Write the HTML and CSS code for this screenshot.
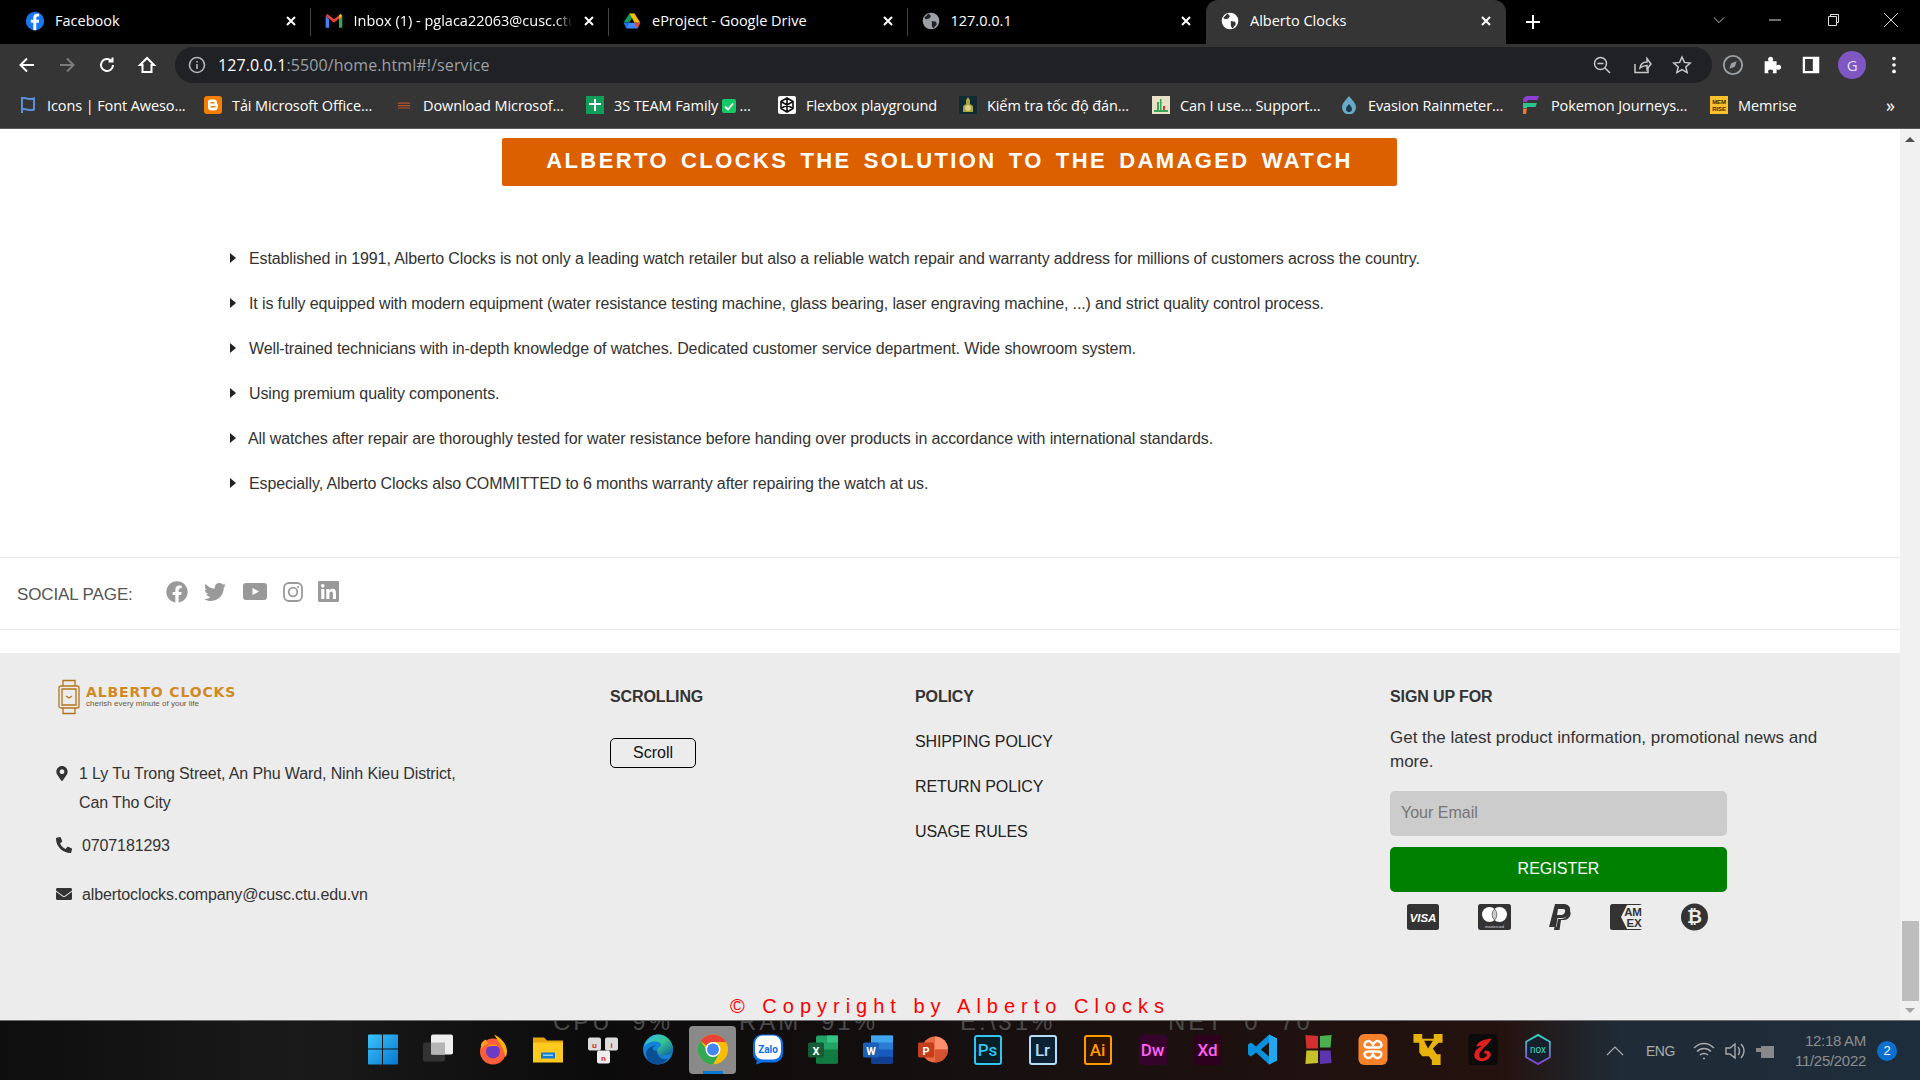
FILE: index.html
```html
<!DOCTYPE html>
<html lang="en">
<head>
<meta charset="utf-8">
<title>Alberto Clocks</title>
<link rel="stylesheet" href="styles.css">
</head>
<body>
<header class="chrome">
  <div class="tabstrip">
    <div class="tab">
      <svg class="fav" viewBox="0 0 24 24"><circle cx="12" cy="12" r="11" fill="#1877f2"/><path d="M13.5 23v-9h3l.5-3.5h-3.5V8.300c0-1 .5-1.800 1.900-1.800H17V3.400c-.8-.1-1.700-.2-2.500-.2-2.700 0-4.500 1.600-4.500 4.600v2.700H7V14h3v9z" fill="#fff"/></svg>
      <span class="tab-title">Facebook</span>
      <svg class="tab-x" viewBox="0 0 12 12"><path d="M2 2l8 8M10 2l-8 8"/></svg>
    </div>
    <div class="tab">
      <svg class="fav" viewBox="0 0 24 24"><path d="M2 6v14h4V10z" fill="#4285f4"/><path d="M22 6v14h-4V10z" fill="#34a853"/><path d="M2 6l10 8 10-8-2-2.500-8 6.500-8-6.500z" fill="#ea4335"/><path d="M18 10l4-4-2-2.500-2 1.500z" fill="#fbbc04"/></svg>
      <span class="tab-title tab-fade">Inbox (1) - pglaca22063@cusc.ctu.edu.vn</span>
      <svg class="tab-x" viewBox="0 0 12 12"><path d="M2 2l8 8M10 2l-8 8"/></svg>
    </div>
    <div class="tab">
      <svg class="fav" viewBox="0 0 24 24"><path d="M9 3h6l-6 10.500H2z" fill="#0f9d58"/><path d="M15 3l7 11h-7L9 3z" fill="#fbbc04"/><path d="M2 14l3.500 7h13l3.500-7z" fill="#4285f4"/><path d="M2 14h7l-3.500 7z" fill="#1a73e8"/><path d="M15 14h7l-3.500 7z" fill="#ea4335"/></svg>
      <span class="tab-title">eProject - Google Drive</span>
      <svg class="tab-x" viewBox="0 0 12 12"><path d="M2 2l8 8M10 2l-8 8"/></svg>
    </div>
    <div class="tab">
      <svg class="fav" viewBox="0 0 24 24"><circle cx="12" cy="12" r="10" fill="#9aa0a6"/><path d="M9 3l3 3-2 3-4 1-2-2zM13 12l5 1 1 3-4 5-2-3z" fill="#202124"/></svg>
      <span class="tab-title">127.0.0.1</span>
      <svg class="tab-x" viewBox="0 0 12 12"><path d="M2 2l8 8M10 2l-8 8"/></svg>
    </div>
    <div class="tab tab-active">
      <svg class="fav" viewBox="0 0 24 24"><circle cx="12" cy="12" r="10" fill="#fff"/><path d="M9 3l3 3-2 3-4 1-2-2zM13 12l5 1 1 3-4 5-2-3z" fill="#353535"/></svg>
      <span class="tab-title">Alberto Clocks</span>
      <svg class="tab-x" viewBox="0 0 12 12"><path d="M2 2l8 8M10 2l-8 8"/></svg>
    </div>
    <svg class="newtab" viewBox="0 0 14 14"><path d="M7 0v14M0 7h14"/></svg>
    <div class="winctl">
      <svg viewBox="0 0 14 14"><path d="M1 4l6 6 6-6"/></svg>
      <svg viewBox="0 0 14 14"><path d="M1 7h12"/></svg>
      <svg viewBox="0 0 14 14"><path d="M2.500 3.500h8v9h-8zM4.500 3.500V1.500h8v8h-2"/></svg>
      <svg viewBox="0 0 14 14"><path d="M0 0l14 14M14 0L0 14"/></svg>
    </div>
  </div>
  <div class="toolbar">
    <div class="nav">
      <svg viewBox="0 0 20 20"><path d="M17 10H4M10 3.500L3.500 10l6.500 6.500"/></svg>
      <svg class="nav-off" viewBox="0 0 20 20"><path d="M3 10h13M10 3.500l6.500 6.500-6.500 6.500"/></svg>
      <svg viewBox="0 0 20 20"><path d="M16 10a6 6 0 1 1-1.800-4.300M15.500 2.500v4h-4"/></svg>
      <svg viewBox="0 0 20 20"><path d="M10 3l7 7h-2.500v7h-9v-7H3z"/></svg>
    </div>
    <div class="omnibox">
      <svg class="omni-info" viewBox="0 0 20 20"><circle cx="10" cy="10" r="7.500"/><path d="M10 9v5M10 6v1.500"/></svg>
      <span class="url"><span class="url-host">127.0.0.1</span>:5500/home.html#!/service</span>
      <div class="omni-actions">
        <svg viewBox="0 0 20 20"><circle cx="8.500" cy="8.500" r="6"/><path d="M13 13l5 5M5.500 8.500h6"/></svg>
        <svg viewBox="0 0 20 20"><path d="M3 9v8.500h13V13M8 13c.5-4 3-6 7-6V3.500l4 5.500-4 5v-3.500c-3 0-5 .8-7 2.500z"/></svg>
        <svg viewBox="0 0 20 20"><path d="M10 2l2.400 5.400 5.800.6-4.400 3.900 1.300 5.700L10 14.700l-5.100 2.900 1.300-5.700L1.800 8l5.800-.6z"/></svg>
      </div>
    </div>
    <div class="ext">
      <svg class="ext-dim" viewBox="0 0 24 24"><circle cx="12" cy="12" r="10"/><path d="M8 16l2-6 6-2-2 6z" fill="#9aa0a6"/></svg>
      <svg class="ext-solid" viewBox="0 0 24 24"><path d="M4 8h4.500c-.5-1-.8-1.500-.8-2.300C7.700 4 9 3 10.500 3s2.800 1 2.800 2.700c0 .8-.3 1.300-.8 2.300H17v4.500c1-.5 1.500-.8 2.300-.8 1.700 0 2.700 1.300 2.700 2.800s-1 2.800-2.700 2.800c-.8 0-1.300-.3-2.300-.8V21h-4.500c.5-1 .8-1.500.8-2.200 0-1.200-1.200-2-2.800-2s-2.800.8-2.800 2c0 .7.300 1.200.8 2.200H4z"/></svg>
      <svg class="ext-solid" viewBox="0 0 24 24"><path fill-rule="evenodd" d="M3 3h18v18H3zM5.500 5.500v13H14v-13z"/></svg>
      <span class="avatar">G</span>
      <svg class="ext-solid" viewBox="0 0 24 24"><circle cx="12" cy="5" r="2"/><circle cx="12" cy="12" r="2"/><circle cx="12" cy="19" r="2"/></svg>
    </div>
  </div>
  <div class="bookmarks">
    <div class="bm"><svg viewBox="0 0 18 18"><path d="M3 1v16M3 2.500c4-2 6 2 12 0v11c-6 2-8-2-12 0" fill="none" stroke="#5b8fd6" stroke-width="2"/></svg><span>Icons | Font Aweso...</span></div>
    <div class="bm"><svg viewBox="0 0 18 18"><rect x="0" width="18" height="18" rx="3" fill="#f57d00"/><path d="M6 3.500h4c2 0 3 1 3 3v1c1 .5 1 1.500 1 3 0 2.500-1.500 4-4 4H7c-2 0-3-1.500-3-3v-5c0-2 .5-3 2-3z" fill="#fff"/><rect x="6.500" y="6" width="4" height="1.500" fill="#f57d00"/><rect x="6.500" y="10" width="5" height="1.500" fill="#f57d00"/></svg><span>Tải Microsoft Office...</span></div>
    <div class="bm"><svg viewBox="0 0 18 18"><path d="M3 6.500h12v1.200H3zM3 9h12v1.200H3zM3 11.500h12v1H3z" fill="#b5532a"/></svg><span>Download Microsof...</span></div>
    <div class="bm"><svg viewBox="0 0 18 18"><rect width="18" height="18" fill="#0f9d58"/><path d="M8 3h2v12H8zM3 7h12v2H3z" fill="#fff"/></svg><span>3S TEAM Family <svg class="bm-check" viewBox="0 0 14 14"><rect width="14" height="14" rx="2" fill="#17c964"/><path d="M3 7.500l3 3 5-6" fill="none" stroke="#fff" stroke-width="1.800"/></svg> ...</span></div>
    <div class="bm"><svg viewBox="0 0 18 18"><rect width="18" height="18" rx="2" fill="#fff"/><path d="M9 2l6 3.500v7L9 16l-6-3.500v-7zM9 2v14M3 5.500l12 7M15 5.500l-12 7" fill="none" stroke="#111" stroke-width="1.600"/></svg><span>Flexbox playground</span></div>
    <div class="bm"><svg viewBox="0 0 18 18"><rect width="18" height="18" fill="#0f2a33"/><path d="M9 1l2 3v4l3 2v6H4v-6l3-2V4z" fill="#a9a13a"/><circle cx="9" cy="12" r="3" fill="#d8cf86"/></svg><span>Kiểm tra tốc độ đán...</span></div>
    <div class="bm"><svg viewBox="0 0 18 18"><rect width="18" height="18" fill="#e9e0c8"/><path d="M2 14h14v2H2z" fill="#3aa655"/><path d="M5 14V6h2v8zM8 14V3h1.500v11z" fill="#3aa655"/><path d="M11 14v-4h2v4z" fill="#d33"/></svg><span>Can I use... Support...</span></div>
    <div class="bm"><svg viewBox="0 0 18 18"><path d="M9 0c3 4 7 7 7 11.500a7 7 0 0 1-14 0C2 7 6 4 9 0z" fill="#6aa9c8"/><path d="M9 8c1.500 2 3 3 3 5a3 3 0 0 1-6 0c0-2 1.500-3 3-5z" fill="#1d3b4c"/></svg><span>Evasion Rainmeter...</span></div>
    <div class="bm"><svg viewBox="0 0 18 18"><path d="M2 5c0-3 2-5 5-5h11l-1.500 4H8C6.500 4 6 5 6 6H2z" fill="#8e3fd6"/><path d="M2 7h14l-1.500 4H6v1H2z" fill="#2fc38e"/><path d="M2 12.500h4l-1 5.500H2z" fill="#f07a2a"/></svg><span>Pokemon Journeys...</span></div>
    <div class="bm"><svg viewBox="0 0 18 18"><rect width="18" height="18" fill="#fbc02d"/><text x="9" y="8" class="bm-mem">MEM</text><text x="9" y="15" class="bm-mem">RISE</text></svg><span>Memrise</span></div>
    <div class="bm-more">»</div>
  </div>
</header>

<div class="viewport">
  <main class="page">
    <h1 class="banner">ALBERTO CLOCKS THE SOLUTION TO THE DAMAGED WATCH</h1>
    <ul class="points">
      <li>Established in 1991, Alberto Clocks is not only a leading watch retailer but also a reliable watch repair and warranty address for millions of customers across the country.</li>
      <li>It is fully equipped with modern equipment (water resistance testing machine, glass bearing, laser engraving machine, ...) and strict quality control process.</li>
      <li>Well-trained technicians with in-depth knowledge of watches. Dedicated customer service department. Wide showroom system.</li>
      <li>Using premium quality components.</li>
      <li class="point-tight">All watches after repair are thoroughly tested for water resistance before handing over products in accordance with international standards.</li>
      <li>Especially, Alberto Clocks also COMMITTED to 6 months warranty after repairing the watch at us.</li>
    </ul>
    <section class="social">
      <span class="social-label">SOCIAL PAGE:</span>
      <svg class="si si-fb" viewBox="0 0 512 512"><path d="M504 256C504 119 393 8 256 8S8 119 8 256c0 123.780 90.690 226.380 209.250 245V327.690h-63V256h63v-54.640c0-62.150 37-96.480 93.670-96.480 27.140 0 55.520 4.840 55.520 4.840v61h-31.280c-30.800 0-40.410 19.120-40.410 38.730V256h68.780l-11 71.690h-57.780V501C413.310 482.380 504 379.780 504 256z"/></svg>
      <svg class="si si-tw" viewBox="0 0 512 512"><path d="M459.370 151.716c.325 4.548.325 9.097.325 13.645 0 138.720-105.583 298.558-298.558 298.558-59.452 0-114.680-17.219-161.137-47.106 8.447.974 16.568 1.299 25.340 1.299 49.055 0 94.213-16.568 130.274-44.832-46.132-.975-84.792-31.188-98.112-72.772 6.498.974 12.995 1.624 19.818 1.624 9.421 0 18.843-1.300 27.614-3.573-48.081-9.747-84.143-51.980-84.143-102.985v-1.299c13.969 7.797 30.214 12.670 47.431 13.319-28.264-18.843-46.781-51.005-46.781-87.391 0-19.492 5.197-37.360 14.294-52.954 51.655 63.675 129.300 105.258 216.365 109.807-1.624-7.797-2.599-15.918-2.599-24.040 0-57.828 46.782-104.934 104.934-104.934 30.213 0 57.502 12.670 76.670 33.137 23.715-4.548 46.456-13.320 66.599-25.340-7.798 24.366-24.366 44.833-46.132 57.827 21.117-2.273 41.584-8.122 60.426-16.243-14.292 20.791-32.161 39.308-52.628 54.253z"/></svg>
      <svg class="si si-yt" viewBox="0 0 24 17"><path fill-rule="evenodd" d="M3 0h18a3 3 0 0 1 3 3v11a3 3 0 0 1-3 3H3a3 3 0 0 1-3-3V3a3 3 0 0 1 3-3zM9.500 5v7l6.500-3.500z"/></svg>
      <svg class="si si-ig" viewBox="0 0 20 20"><rect x="1" y="1" width="18" height="18" rx="5" fill="none"/><circle cx="10" cy="10" r="4.300" fill="none"/><circle cx="15" cy="5" r="1.100" class="si-dot"/></svg>
      <svg class="si si-in" viewBox="0 0 448 448"><path transform="translate(0 -32)" d="M416 32H31.900C14.300 32 0 46.500 0 64.300v383.400C0 465.500 14.300 480 31.900 480H416c17.600 0 32-14.500 32-32.300V64.300c0-17.800-14.400-32.300-32-32.300zM135.400 416H69V202.200h66.500V416zm-33.200-243c-21.300 0-38.500-17.300-38.500-38.500S80.900 96 102.200 96c21.200 0 38.500 17.300 38.500 38.500 0 21.300-17.200 38.500-38.500 38.500zm282.100 243h-66.400V312c0-24.800-.5-56.700-34.500-56.700-34.600 0-39.900 27-39.900 54.900V416h-66.400V202.200h63.700v29.200h.9c8.900-16.800 30.600-34.500 62.900-34.500 67.200 0 79.700 44.300 79.700 101.900V416z"/></svg>
    </section>
    <footer class="footer">
      <div class="fgrid">
        <div class="fcol-brand">
          <div class="logo">
            <svg class="logo-watch" viewBox="0 0 22 36"><path d="M5 7V1.500h12V7M5 29v5.500h12V29M3 7h16a2 2 0 0 1 2 2v18a2 2 0 0 1-2 2H3a2 2 0 0 1-2-2V9a2 2 0 0 1 2-2zM4 10h14v16H4zM8 17l3 2 3-2"/></svg>
            <div class="logo-text">
              <div class="logo-name">ALBERTO CLOCKS</div>
              <div class="logo-tag">cherish every minute of your life</div>
            </div>
          </div>
          <div class="contact contact-addr">
            <svg class="c-pin" viewBox="0 0 384 512"><path d="M172.268 501.670C26.970 291.031 0 268.413 0 192 0 85.961 85.961 0 192 0s192 85.961 192 192c0 76.413-26.970 99.031-172.268 309.670-9.535 13.774-29.930 13.773-39.464 0zM192 272c44.183 0 80-35.817 80-80s-35.817-80-80-80-80 35.817-80 80 35.817 80 80 80z"/></svg>
            <span>1 Ly Tu Trong Street, An Phu Ward, Ninh Kieu District,<br>Can Tho City</span>
          </div>
          <div class="contact contact-phone">
            <svg class="c-ico" viewBox="0 0 512 512"><path transform="matrix(-1 0 0 1 512 0)" d="M493.400 24.600l-104-24c-11.300-2.600-22.900 3.300-27.500 13.900l-48 112c-4.200 9.800-1.400 21.300 6.900 28l60.600 49.600c-36 76.700-98.900 140.500-177.200 177.200l-49.600-60.600c-6.800-8.300-18.200-11.100-28-6.900l-112 48C3.900 366.500-2 378.100.6 389.400l24 104C27.100 504.200 36.700 512 48 512c256.100 0 464-207.500 464-464 0-11.200-7.700-20.900-18.600-23.400z"/></svg>
            <span>0707181293</span>
          </div>
          <div class="contact contact-mail">
            <svg class="c-ico" viewBox="0 0 512 512"><path d="M502.300 190.800c3.900-3.100 9.700-.2 9.700 4.700V400c0 26.500-21.500 48-48 48H48c-26.500 0-48-21.500-48-48V195.600c0-5 5.700-7.800 9.700-4.700 22.400 17.400 52.100 39.500 154.100 113.600 21.100 15.400 56.700 47.800 92.200 47.600 35.700.3 72-32.800 92.300-47.600 102-74.100 131.600-96.300 154-113.700zM256 320c23.200.4 56.600-29.200 73.400-41.400 132.700-96.300 142.800-104.700 173.400-128.700 5.800-4.500 9.200-11.500 9.200-18.900v-19c0-26.500-21.500-48-48-48H48C21.500 64 0 85.500 0 112v19c0 7.400 3.400 14.300 9.200 18.900 30.600 23.900 40.700 32.400 173.400 128.700 16.800 12.200 50.200 41.800 73.400 41.400z"/></svg>
            <span>albertoclocks.company@cusc.ctu.edu.vn</span>
          </div>
        </div>
        <div class="fcol">
          <h4 class="fhead">SCROLLING</h4>
          <button class="scroll-btn">Scroll</button>
        </div>
        <div class="fcol">
          <h4 class="fhead">POLICY</h4>
          <ul class="flinks">
            <li>SHIPPING POLICY</li>
            <li>RETURN POLICY</li>
            <li>USAGE RULES</li>
          </ul>
        </div>
        <div class="fcol">
          <h4 class="fhead">SIGN UP FOR</h4>
          <p class="signup-text">Get the latest product information, promotional news and more.</p>
          <input class="signup-input" type="text" placeholder="Your Email">
          <button class="signup-btn">REGISTER</button>
          <div class="pay">
            <svg viewBox="0 0 32 26"><rect width="32" height="26" rx="2.500" fill="#333"/><text x="16" y="18" class="pay-visa">VISA</text></svg>
            <svg viewBox="0 0 33 26"><rect width="33" height="26" rx="2.500" fill="#333"/><circle cx="11.500" cy="10.500" r="7.500" fill="#fff"/><circle cx="21.500" cy="10.500" r="7.500" fill="#fff"/><path d="M16.500 5a7.500 7.500 0 0 1 0 11a7.500 7.500 0 0 1 0-11z" fill="#ccc" stroke="#333" stroke-width=".6"/><text x="16.500" y="23.500" class="pay-mc">mastercard</text></svg>
            <svg viewBox="0 0 22 26"><path d="M6 0h8c5 0 8 2.500 7 7.500S16 14 12 14H8.500L7 23H0z" fill="#333"/><path d="M9 5h5c2 0 2.500 1 2 3s-2 3-4 3H8z" fill="#ececec"/><path d="M20 6c3 2 2 9-5 10h-3l-1.500 10H5l.5-3h2L9 15h3c4 0 8-3 8-9z" fill="#333"/></svg>
            <svg viewBox="0 0 32 26"><rect width="32" height="26" rx="2.500" fill="#333"/><path d="M11 13L17 1h15v24H17z" fill="#ececec"/><text x="23" y="12" class="pay-amex">AM</text><text x="24" y="23" class="pay-amex">EX</text></svg>
            <svg viewBox="0 0 29 29"><circle cx="14.500" cy="14.500" r="14" fill="#333"/><text x="14.500" y="21" class="pay-btc">₿</text></svg>
          </div>
        </div>
      </div>
      <div class="copyright">© Copyright by Alberto Clocks</div>
    </footer>
  </main>
  <aside class="scrollbar">
    <span class="sb-up"></span>
    <span class="sb-thumb"></span>
    <span class="sb-down"></span>
  </aside>
</div>

<footer class="taskbar">
  <div class="ghost"><span>CPU 9%</span><span>RAM 91%</span><span>E:\31%</span><span>NET 0 70</span></div>
  <div class="tb-apps">
    <div class="tb"><svg viewBox="0 0 30 30"><defs><linearGradient id="win" x1="0" y1="0" x2="1" y2="1"><stop offset="0" stop-color="#3cc4fa"/><stop offset="1" stop-color="#0677d0"/></linearGradient></defs><path d="M0 1a1 1 0 0 1 1-1h13v14H0zM15 0h14a1 1 0 0 1 1 1v13H15zM0 15h14v15H1a1 1 0 0 1-1-1zM15 15h15v14a1 1 0 0 1-1 1H15z" fill="url(#win)"/></svg></div>
    <div class="tb"><svg viewBox="0 0 30 30"><rect x="0" y="8" width="22" height="19" rx="2" fill="#333"/><rect x="8" y="0" width="22" height="20" rx="2" fill="#eee"/><rect x="8" y="8" width="14" height="12" fill="#b5b5b5"/></svg></div>
    <div class="tb"><svg viewBox="0 0 30 30"><circle cx="15" cy="17" r="13" fill="#ff5e3a"/><path d="M16 0c8 4 13 10 13 17 0 2-.5 4-1.500 6-1-8-5-13-11.500-23z" fill="#ffb400"/><path d="M3 10c1-3 3-4 5-5 0 2 1 3 3 4-4 1-6 3-8 6z" fill="#ff9c27"/><circle cx="15" cy="17" r="7" fill="#6a3bc4"/><path d="M9 12c3-3 9-3 11 0-3-1-8 0-11 0z" fill="#ff9500"/></svg></div>
    <div class="tb"><svg viewBox="0 0 30 28"><path d="M0 2h11l3 3h16v5H0z" fill="#e8a50a"/><path d="M0 7h30v20H0z" fill="#ffc91f"/><path d="M8 17h14v6H8z" fill="#0f7ad1"/><path d="M10 19h10v1.500H10z" fill="#8fd0f7"/></svg></div>
    <div class="tb"><svg viewBox="0 0 30 30"><rect x="0" y="3" width="13" height="13" rx="2" fill="#ddd"/><rect x="17" y="3" width="13" height="13" rx="2" fill="#ddd"/><rect x="9" y="16" width="13" height="13" rx="2" fill="#eee"/><text x="6.500" y="13" class="key">u</text><text x="23.500" y="13" class="key">i</text><text x="15.500" y="26" class="key">n</text></svg></div>
    <div class="tb"><svg viewBox="0 0 30 30"><defs><linearGradient id="edge" x1="0" y1="0" x2="1" y2="1"><stop offset="0" stop-color="#35c1f1"/><stop offset=".5" stop-color="#36c58e"/><stop offset="1" stop-color="#0c59a4"/></linearGradient></defs><circle cx="15" cy="15" r="15" fill="#1184d8"/><path d="M1 13C3 5 9 0 15 0c9 0 15 7 15 15 0 3-3 6-8 6-5 0-8-2-8-5 0-3 4-3 4-6C18 6 5 5 1 13z" fill="url(#edge)"/><path d="M14 16c0 6 5 10 11 8-3 4-7 6-11 6-7 0-11-6-11-11 0-4 5-8 10-8-5 2-4 6 1 5z" fill="#0a4f94"/></svg></div>
    <div class="tb tb-active"><svg viewBox="0 0 30 30"><circle cx="15" cy="15" r="15" fill="#fbbc04"/><path d="M15 0a15 15 0 0 1 13 7.500H15A7.500 7.500 0 0 0 8.500 11.200L2.500 6.500A15 15 0 0 1 15 0z" fill="#ea4335"/><path d="M2.500 6.500A15 15 0 0 0 15 30l6.500-11.200a7.500 7.500 0 0 1-13-3.800z" fill="#34a853"/><circle cx="15" cy="15" r="7.500" fill="#fff"/><circle cx="15" cy="15" r="6" fill="#4285f4"/></svg></div>
    <div class="tb"><svg viewBox="0 0 30 30"><rect width="30" height="28" rx="9" fill="#0a6fe8"/><path d="M4 26l-1 4 6-2z" fill="#0a6fe8"/><rect x="2" y="1" width="26" height="24" rx="8" fill="#fff"/><text x="15" y="18" class="zalo">Zalo</text></svg></div>
    <div class="tb"><svg viewBox="0 0 30 30"><rect x="8" y="1" width="22" height="28" rx="2" fill="#21a366"/><rect x="19" y="1" width="11" height="7" fill="#33c481"/><rect x="8" y="15" width="22" height="14" fill="#107c41"/><rect x="0" y="8" width="16" height="15" rx="1.500" fill="#185c37"/><text x="8" y="20" class="office">X</text></svg></div>
    <div class="tb"><svg viewBox="0 0 30 30"><rect x="8" y="1" width="22" height="28" rx="2" fill="#2b7cd3"/><rect x="8" y="1" width="22" height="7" fill="#41a5ee"/><rect x="8" y="15" width="22" height="7" fill="#185abd"/><rect x="8" y="22" width="22" height="7" fill="#103f91"/><rect x="0" y="8" width="16" height="15" rx="1.500" fill="#1a5fb8"/><text x="8" y="20" class="office">W</text></svg></div>
    <div class="tb"><svg viewBox="0 0 30 30"><circle cx="17" cy="15" r="13" fill="#ed6c47"/><path d="M17 2a13 13 0 0 1 13 13H17z" fill="#ff8f6b"/><path d="M17 15h13a13 13 0 0 1-13 13z" fill="#d35230"/><rect x="0" y="8" width="16" height="15" rx="1.500" fill="#c43e1c"/><text x="8" y="20" class="office">P</text></svg></div>
    <div class="tb"><span class="adobe adobe-ps">Ps</span></div>
    <div class="tb"><span class="adobe adobe-lr">Lr</span></div>
    <div class="tb"><span class="adobe adobe-ai">Ai</span></div>
    <div class="tb"><span class="adobe adobe-dw">Dw</span></div>
    <div class="tb"><span class="adobe adobe-xd">Xd</span></div>
    <div class="tb"><svg viewBox="0 0 30 30"><path d="M21 0l8 4v22l-8 4-13-12-5 4-3-2V10l3-2 5 4zM21 8l-8 7 8 7z" fill="#0a8fdc"/><path d="M21 0l8 4v22l-8 4z" fill="#22a7f0"/></svg></div>
    <div class="tb"><svg viewBox="0 0 30 32"><path d="M2 1l13 1v13H3z" fill="#d32f2f"/><path d="M17 2l12-1-1 13H17z" fill="#4caf50"/><path d="M3 17h12v13L2 31z" fill="#c6c02a"/><path d="M17 17h11l1 13-12 1z" fill="#5e35b1"/></svg></div>
    <div class="tb"><svg viewBox="0 0 30 32"><rect width="30" height="32" rx="6" fill="#f5812a"/><path d="M7 9c3-3 6-2 8 2 2-4 5-5 8-2 2 3 0 5-3 5H10c-3 0-5-2-3-5zM7 23c3 3 6 2 8-2 2 4 5 5 8 2 2-3 0-5-3-5H10c-3 0-5 2-3 5z" fill="none" stroke="#fff" stroke-width="2.500"/></svg></div>
    <div class="tb"><svg viewBox="0 0 30 32"><path d="M0 0h9v5h12V0h9v9h-4l-6 6 4 6h4v11h-9v-5l-3-4H9l-3-4V9H0z" fill="#e8b20d"/><path d="M11 7l4 8 5-8z" fill="#1a1210"/></svg></div>
    <div class="tb"><svg viewBox="0 0 30 32"><rect width="30" height="32" rx="4" fill="#0b0b0b"/><path d="M24 5c-6 0-14 2-16 8l6-1c-3 2-8 4-8 10 0 4 4 6 8 6 5 0 9-3 9-7 0-3-3-4-6-4l-1 3c2 0 3 0 3 2 0 1-2 3-5 3-2 0-3-1-3-3 0-5 8-9 13-17z" fill="#e02020"/></svg></div>
    <div class="tb"><svg viewBox="0 0 30 34"><defs><linearGradient id="nox" x1="0" y1="0" x2="0" y2="1"><stop offset="0" stop-color="#36d6c3"/><stop offset="1" stop-color="#8a3fd6"/></linearGradient></defs><path d="M15 1l13 7.500v17L15 33 2 25.500v-17z" fill="#16202a" stroke="url(#nox)" stroke-width="2"/><text x="15" y="21" class="nox">nox</text></svg></div>
  </div>
  <div class="tray">
    <svg class="tray-chev" viewBox="0 0 18 10"><path d="M1 9l8-8 8 8"/></svg>
    <span class="tray-lang">ENG</span>
    <svg class="tray-ico tray-wifi" viewBox="0 0 22 20"><path d="M1 7c6-6 14-6 20 0M4 10.500c4-4 10-4 14 0M7 14c2-2 6-2 8 0M10 17.500h2"/></svg>
    <svg class="tray-ico tray-vol" viewBox="0 0 22 20"><path d="M2 7h4l5-4v14l-5-4H2zM14 6c2 2 2 6 0 8M17 3c4 4 4 10 0 14"/></svg>
    <svg class="tray-ico tray-bat" viewBox="0 0 22 20"><path d="M6 5h13v12H6zM3 1v6M7 1v4M1 7h6v4H1z" fill="#888"/></svg>
    <div class="clock"><span>12:18 AM</span><span>11/25/2022</span></div>
    <span class="notif">2</span>
  </div>
</footer>
</body>
</html>
```
FILE: styles.css
```css
* { box-sizing: border-box; }
html, body { margin: 0; padding: 0; }
body {
  width: 1920px; height: 1080px; overflow: hidden;
  display: flex; flex-direction: column;
  font-family: "Liberation Sans", Arial, sans-serif;
  font-size: 16px; color: #333; background: #fff;
}
h1, h4, p, ul { margin: 0; padding: 0; }
ul { list-style: none; }

/* browser chrome */
.chrome { flex: none; font-family: "Open Sans", Roboto, sans-serif; color: #fff; }
.tabstrip { height: 44px; background: #000; display: flex; align-items: stretch; padding-left: 12px; }
.tab { width: 298.5px; display: flex; align-items: center; padding: 0 14px 3px 13px; position: relative; font-size: 14.5px; }
.tab::after { content: ""; position: absolute; right: 0; top: 8px; height: 28px; width: 1px; background: #444; }
.tab:nth-child(4)::after { display: none; }
.tab-active { background: #353535; border-radius: 12px 12px 0 0; padding-left: 14px; width: 300px; }
.tab-active::after { display: none; }
.fav { width: 20px; height: 20px; flex: none; }
.tab-title { flex: 1; margin: 0 6px 0 10px; white-space: nowrap; overflow: hidden; }
.tab-fade { margin-right: 10px; -webkit-mask-image: linear-gradient(90deg, #000 92%, transparent); mask-image: linear-gradient(90deg, #000 92%, transparent); }
.tab-x { width: 12px; height: 12px; flex: none; }
.tab-x path { stroke: #fff; stroke-width: 2; fill: none; }
.newtab { width: 14px; height: 14px; align-self: center; margin-left: 20px; flex: none; }
.newtab path { stroke: #fff; stroke-width: 2; fill: none; }
.winctl { margin-left: auto; display: flex; align-items: center; padding-bottom: 4px; }
.winctl svg { width: 14px; height: 14px; margin: 0 22px; }
.winctl svg:first-child { width: 12px; height: 12px; margin-right: 21px; margin-left: 0; }
.winctl svg:nth-child(2) { margin-left: 22px; }
.winctl path { stroke: #ddd; stroke-width: 1; fill: none; }

.toolbar { height: 42px; background: #353535; display: flex; align-items: center; padding-left: 7px; }
.nav { display: flex; flex: none; }
.nav svg { width: 20px; height: 20px; margin: 0 10px; }
.nav path { stroke: #fff; stroke-width: 2; fill: none; }
.nav .nav-off path { stroke: #7b7b7b; }
.omnibox { flex: 1; margin-left: 8px; height: 36px; border-radius: 18px; background: #202124; display: flex; align-items: center; padding: 0 10px 0 12px; }
.omni-info { width: 20px; height: 20px; flex: none; }
.omni-info circle, .omni-info path { stroke: #b5b5b5; stroke-width: 1.600; fill: none; }
.url { margin-left: 11px; font-size: 16px; color: #9aa0a6; letter-spacing: .1px; white-space: nowrap; }
.url-host { color: #fff; }
.omni-actions { margin-left: auto; display: flex; }
.omni-actions svg { width: 20px; height: 20px; margin: 0 10px; }
.omni-actions circle, .omni-actions path { stroke: #c9c9c9; stroke-width: 1.500; fill: none; }
.ext { width: 208px; flex: none; display: flex; align-items: center; padding-left: 10px; justify-content: space-between; padding-right: 15px; }
.ext svg { width: 22px; height: 22px; }
.ext-dim circle { stroke: #9aa0a6; stroke-width: 2; fill: none; }
.ext-solid { fill: #fff; }
.avatar { width: 28px; height: 28px; border-radius: 50%; background: #7e57c2; color: #e8def8; font-size: 15px; display: flex; align-items: center; justify-content: center; }

.bookmarks { height: 43px; background: #353535; border-bottom: 1px solid #5a5a5a; display: grid; grid-template-columns: 185px 191px 191px 192px 181px 193px 188px 181px 189px 159px 1fr; padding: 0 0 4px 19px; align-items: center; font-size: 14.5px; letter-spacing: -.1px; color: #fff; }
.bm { display: flex; align-items: center; gap: 10px; white-space: nowrap; }
.bm:nth-child(9) { gap: 12px; }
.bm > svg { width: 18px; height: 18px; flex: none; }
.bm-check { width: 14px; height: 14px; vertical-align: -2px; }
.bm-mem { font: bold 6px "Liberation Sans", sans-serif; fill: #3a2a00; text-anchor: middle; }
.bm-more { font-size: 18px; text-align: center; padding-right: 8px; line-height: 1; }

/* page */
.viewport { flex: 1; min-height: 0; display: flex; }
.page { flex: 1; min-width: 0; overflow: hidden; background: #fff; letter-spacing: -.12px; }
.banner { width: 895px; height: 48px; margin: 9px 0 0 502px; background: #dd6000; border-radius: 2px; color: #fff; font-size: 22px; font-weight: 700; letter-spacing: 2.400px; word-spacing: 3.600px; line-height: 46px; text-align: center; white-space: nowrap; }
.points { margin-top: 50px; }
.points li { height: 45px; line-height: 45px; padding-left: 249px; position: relative; white-space: nowrap; color: #333; }
.points li::before { content: ""; position: absolute; left: 230px; top: 17px; border-left: 6px solid #222; border-top: 5px solid transparent; border-bottom: 5px solid transparent; }
.points .point-tight { padding-left: 248px; }

.social { margin-top: 51px; height: 73px; border-top: 1px solid #e8e8e8; border-bottom: 1px solid #e8e8e8; display: flex; align-items: center; padding-left: 17px; }
.social-label { font-size: 17px; color: #555; width: 149px; padding-top: 3px; }
.si { fill: #999; flex: none; margin-top: -4px; }
.si-fb { width: 22px; height: 22px; margin-right: 16px; }
.si-tw { width: 22px; height: 22px; margin-right: 17px; }
.si-yt { width: 24px; height: 17px; margin-right: 16px; }
.si-ig { width: 20px; height: 20px; margin-right: 15px; stroke: #999; stroke-width: 1.800; }
.si-ig .si-dot { fill: #999; stroke: none; }
.si-in { width: 21px; height: 21px; }

.footer { height: 367px; margin-top: 23px; background: #ececec; padding-top: 26px; overflow: hidden; }
.fgrid { display: grid; grid-template-columns: 554px 305px 475px 1fr; padding-left: 56px; }
.logo { display: flex; align-items: center; gap: 6px; height: 35px; margin-left: 2px; }
.logo-watch { width: 22px; height: 36px; flex: none; fill: none; stroke: #b5741c; stroke-width: 1.300; }
.logo-name { font: bold 14px/14px "DejaVu Sans", sans-serif; letter-spacing: .85px; color: #d08a24; white-space: nowrap; padding-top: 1px; }
.logo-tag { font-size: 8px; line-height: 10px; color: #6b5a3c; white-space: nowrap; letter-spacing: 0; }
.contact { display: flex; line-height: 29px; color: #333; }
.contact-addr { margin-top: 45px; }
.contact-phone { margin-top: 14px; }
.contact-mail { margin-top: 20px; }
.c-pin { width: 12px; height: 15px; margin: 7px 11px 0 0; flex: none; fill: #333; }
.c-ico { width: 16px; height: 16px; margin: 6px 10px 0 0; flex: none; fill: #333; }
.fcol { padding-top: 6px; }
.fhead { font-size: 16px; line-height: 24px; font-weight: 700; color: #333; }
.scroll-btn { display: block; margin-top: 29px; width: 86px; height: 30px; border: 1px solid #000; border-radius: 5px; background: transparent; font: 16px "Liberation Sans", sans-serif; color: #111; padding: 0; }
.flinks { margin-top: 10px; }
.flinks li { height: 45px; line-height: 45px; color: #222; }
.signup-text { margin-top: 17px; width: 440px; font-size: 17px; letter-spacing: 0; line-height: 24px; color: #333; }
.signup-input { display: block; margin-top: 17px; width: 337px; height: 45px; border: 0; border-radius: 5px; background: #ccc; padding: 0 11px 2px; font: 16px "Liberation Sans", sans-serif; color: #333; }
.signup-input::placeholder { color: #757575; opacity: 1; }
.signup-btn { display: block; margin-top: 11px; width: 337px; height: 45px; border: 0; border-radius: 5px; background: #008000; color: #fff; font: 16px "Liberation Sans", sans-serif; padding: 0 0 2px; }
.pay { margin-top: 11px; width: 337px; height: 28px; padding: 0 18px 0 17px; display: flex; justify-content: space-between; align-items: center; }
.pay svg { height: 26px; flex: none; }
.pay svg:nth-child(1), .pay svg:nth-child(4) { width: 32px; }
.pay svg:nth-child(2) { width: 33px; }
.pay svg:nth-child(3) { width: 22px; }
.pay svg:nth-child(5) { width: 29px; height: 28px; }
.pay-visa { font: italic 700 11.500px "Liberation Sans", sans-serif; fill: #fff; text-anchor: middle; }
.pay-mc { font: 4px "Liberation Sans", sans-serif; fill: #ddd; text-anchor: middle; }
.pay-amex { font: 700 11.500px "Liberation Sans", sans-serif; fill: #333; text-anchor: middle; }
.pay-btc { font: 900 19px "DejaVu Sans", sans-serif; fill: #ececec; text-anchor: middle; }
.copyright { margin-top: 60px; text-align: center; font-size: 20px; line-height: 30px; letter-spacing: 6px; color: #f00; white-space: nowrap; }

.scrollbar { width: 20px; flex: none; background: #f1f1f1; display: flex; flex-direction: column; align-items: center; padding: 8px 0 7px 0; }
.sb-up { width: 0; height: 0; border-left: 5px solid transparent; border-right: 5px solid transparent; border-bottom: 5px solid #505050; }
.sb-thumb { width: 17px; height: 80px; background: #bdbdbd; margin-top: auto; }
.sb-down { width: 0; height: 0; margin-top: 7px; border-left: 5px solid transparent; border-right: 5px solid transparent; border-top: 5px solid #a3a3a3; }

/* taskbar */
.taskbar {
  flex: none; height: 60px; position: relative; overflow: hidden;
  display: flex; align-items: center; padding: 0 0 2px 355px;
  border-top: 1px solid #6d6d6d;
  background: linear-gradient(90deg, #0e0e0e 0, #1a1a1a 300px, #0c0b0b 600px, #171010 1000px, #24120e 1500px, #1f2b36 1620px, #1e2d3b 1920px);
  color: #bbb;
}
.ghost { position: absolute; left: 553px; top: -13px; display: grid; grid-template-columns: 186px 221px 208px auto; font: 24px "Liberation Sans", sans-serif; letter-spacing: 3px; word-spacing: 10px; color: #4a4a4a; white-space: nowrap; }
.tb-apps { display: flex; position: relative; }
.tb { width: 55px; height: 48px; display: flex; align-items: center; justify-content: center; }
.tb > svg { width: 30px; height: 31px; }
.tb-active { background: #8a8a8a; border-radius: 4px; width: 47px; margin: 0 4px; position: relative; }
.tb-active::after { content: ""; position: absolute; left: 14px; bottom: 0; width: 20px; height: 3px; background: #0b78d0; }
.key { font: bold 8px "Liberation Sans", sans-serif; fill: #d22; text-anchor: middle; }
.zalo { font: bold 10px Roboto, sans-serif; fill: #0a6fe8; text-anchor: middle; }
.office { font: bold 11px Roboto, sans-serif; fill: #fff; text-anchor: middle; }
.nox { font: 11px Roboto, sans-serif; fill: #39d6c6; text-anchor: middle; }
.adobe { width: 28px; height: 30px; border-radius: 3px; display: flex; align-items: center; justify-content: center; font: 500 17px Roboto, sans-serif; border: 2px solid; }
.adobe-ps { color: #31c5f0; background: #061e26; border-color: #31c5f0; }
.adobe-lr { color: #b4dcf5; background: #0c2233; border-color: #b4dcf5; }
.adobe-ai { color: #ff9a00; background: #2e1300; border-color: #ff9a00; }
.adobe-dw { color: #ff61f6; background: #35032c; border-color: #35032c; }
.adobe-xd { color: #ff61f6; background: #2e001e; border-color: #2e001e; }
.tray { position: absolute; left: 1606px; right: 0; top: 0; height: 59px; display: flex; align-items: center; }
.tray-chev { width: 18px; height: 10px; fill: none; stroke: #aaa; stroke-width: 1.200; flex: none; }
.tray-lang { margin-left: 22px; font-size: 14px; color: #aaa; width: 32px; letter-spacing: -.5px; }
.tray-ico { width: 22px; height: 20px; flex: none; fill: none; stroke: #aaa; stroke-width: 1.400; }
.tray-wifi { margin-left: 15px; }
.tray-vol { margin-left: 9px; }
.tray-bat { margin-left: 9px; stroke: none; }
.clock { width: 89px; margin-left: 0; display: flex; flex-direction: column; align-items: flex-end; font-size: 15px; line-height: 20px; color: #8d8d8d; letter-spacing: -.3px; }
.notif { width: 20px; height: 20px; margin-left: 11px; border-radius: 50%; background: #0b6fd0; color: #fff; font-size: 13px; display: flex; align-items: center; justify-content: center; }
```
